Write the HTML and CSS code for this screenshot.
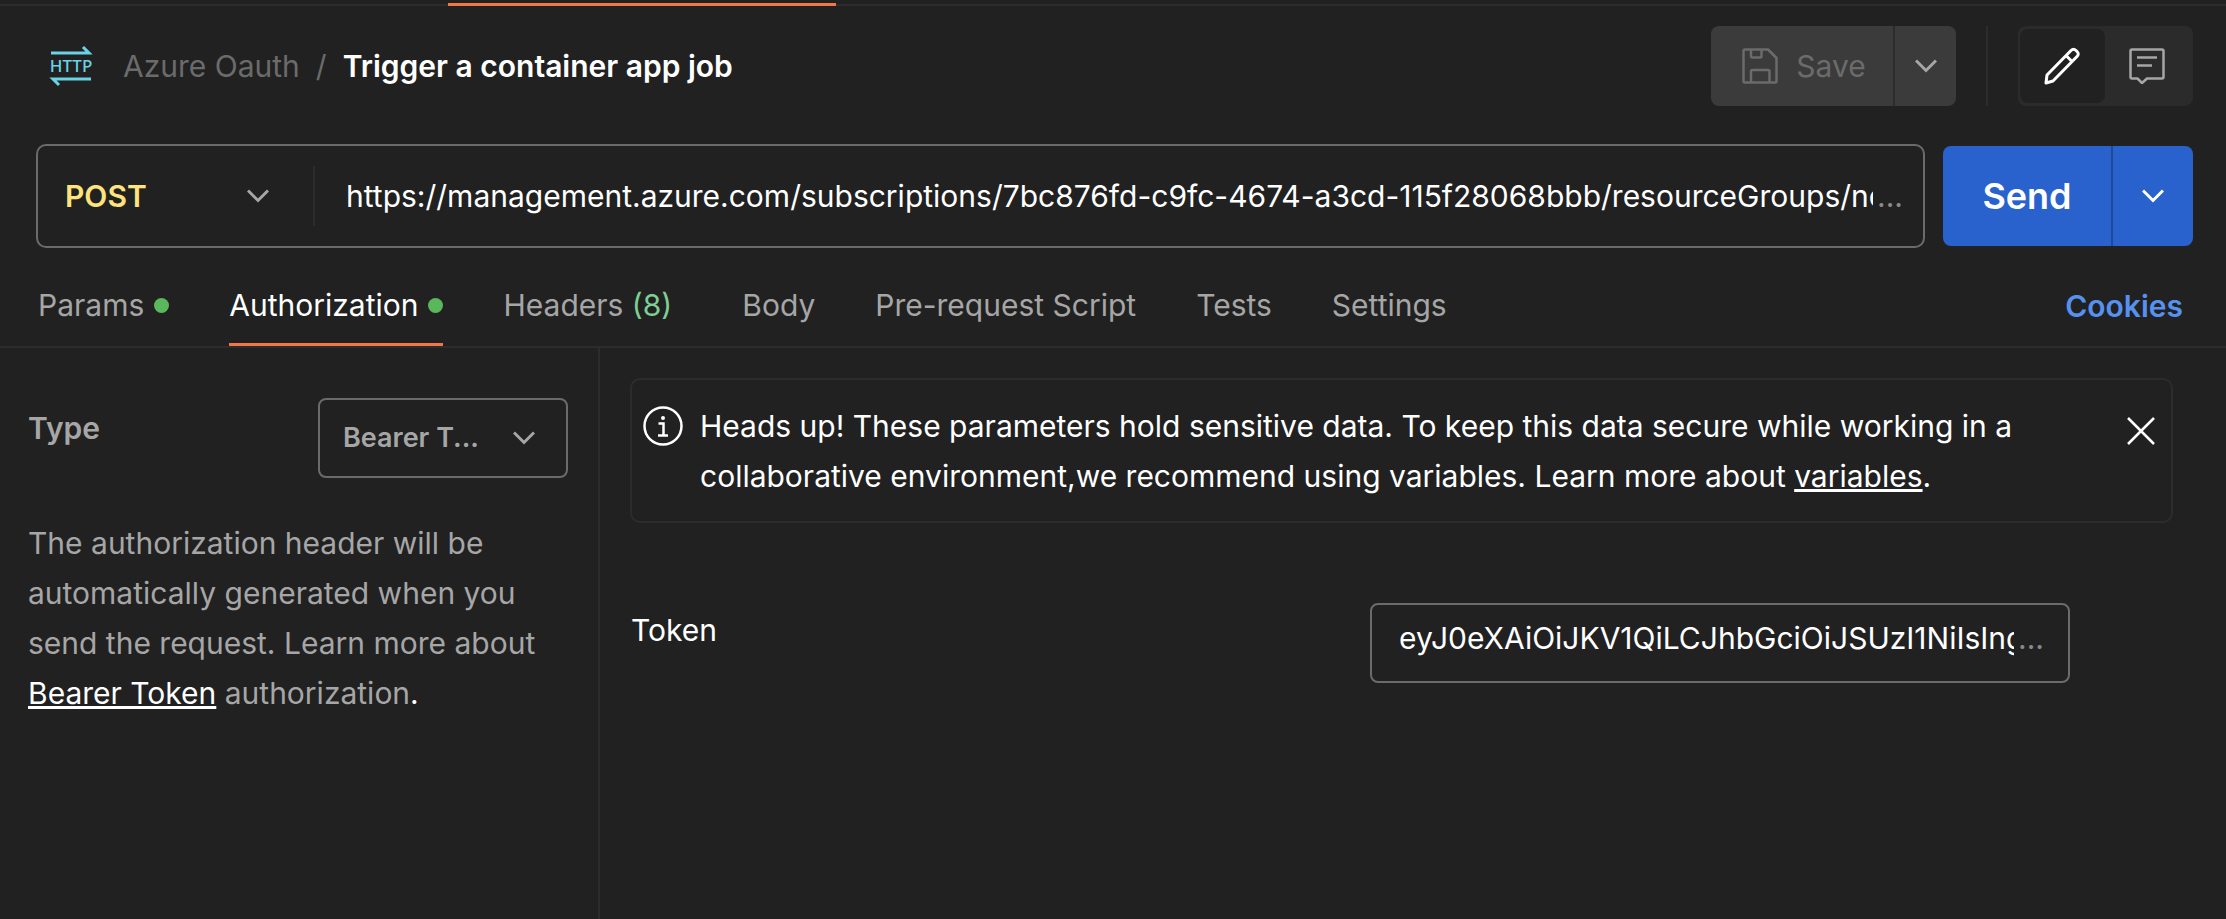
FILE: index.html
```html
<!DOCTYPE html>
<html lang="en">
<head>
<meta charset="utf-8">
<title>Trigger a container app job</title>
<link rel="stylesheet" href="styles.css">
</head>
<body>
<div class="tab-strip"><span class="tab-strip-active"></span></div>

<header class="header">
  <svg class="http-icon" width="40" height="40" viewBox="0 0 40 40" aria-hidden="true">
    <path d="M0 7H38L32 1M40 33H2L8 39" fill="none" stroke="currentColor" stroke-width="3"/>
    <text x="20" y="26" text-anchor="middle" fill="currentColor" class="http-text">HTTP</text>
  </svg>
  <nav class="crumbs" aria-label="Breadcrumb">
    <a class="crumb-parent" href="#">Azure Oauth</a>
    <span class="crumb-sep">/</span>
    <h1 class="crumb-title">Trigger a container app job</h1>
  </nav>
  <div class="split save">
    <button class="save-main" type="button" disabled>
      <svg width="36" height="36" viewBox="0 0 36 36" fill="none" stroke="currentColor" stroke-width="2.500" stroke-linejoin="round"><path d="M3 1.500H26L34.500 10V33Q34.500 34.500 33 34.500H3Q1.500 34.500 1.500 33V3Q1.500 1.500 3 1.500Z"/><path d="M9 1.500V8Q9 9.500 10.500 9.500H18Q19.500 9.500 19.500 8V1.500M9 34.500V23.500Q9 22 10.500 22H26Q27.500 22 27.500 23.500V34.500"/></svg>
      Save
    </button>
    <button class="save-more" type="button" aria-label="Save options">
      <svg width="22" height="14" viewBox="0 0 22 14" class="chevron"><path d="M1 1.500L11 11.500L21 1.500"/></svg>
    </button>
  </div>
  <span class="header-rule"></span>
  <div class="modes">
    <button class="mode mode-active" type="button" aria-label="Edit">
      <svg width="36" height="38" viewBox="0 0 36 38" fill="none" stroke="currentColor" stroke-width="3" stroke-linejoin="round"><path d="M2 36L3 28L27 3.500Q29.500 1 32 3.500L33 4.500Q35.500 7 33 9.500L9 34Z"/><path d="M22 8.500L28 14.500"/></svg>
    </button>
    <button class="mode" type="button" aria-label="Comments">
      <svg width="36" height="36" viewBox="0 0 36 36" fill="none" stroke="currentColor" stroke-width="2.500" stroke-linejoin="round"><path d="M3 1.500H33Q34.500 1.500 34.500 3V29Q34.500 30.500 33 30.500H18L13 35L8.500 30.500H3Q1.500 30.500 1.500 29V3Q1.500 1.500 3 1.500Z"/><path d="M8 9.500H28M8 17.500H23"/></svg>
    </button>
  </div>
</header>

<form class="request">
  <div class="url-box">
    <button class="method" type="button">POST
      <svg width="22" height="14" viewBox="0 0 22 14" class="chevron"><path d="M1 1.500L11 11.500L21 1.500"/></svg>
    </button>
    <input class="url" type="text" aria-label="Request URL" value="https://management.azure.com/subscriptions/7bc876fd-c9fc-4674-a3cd-115f28068bbb/resourceGroups/ne">
    <span class="more">...</span>
  </div>
  <div class="split send">
    <button class="send-main" type="button">Send</button>
    <button class="send-more" type="button" aria-label="Send options">
      <svg width="22" height="14" viewBox="0 0 22 14" class="chevron"><path d="M1 1.500L11 11.500L21 1.500"/></svg>
    </button>
  </div>
</form>

<nav class="tabs" aria-label="Request settings">
  <a class="tab" href="#">Params<span class="dot"></span></a>
  <a class="tab tab-active" href="#">Authorization<span class="dot"></span></a>
  <a class="tab" href="#">Headers <span class="count">(8)</span></a>
  <a class="tab" href="#">Body</a>
  <a class="tab" href="#">Pre-request Script</a>
  <a class="tab" href="#">Tests</a>
  <a class="tab" href="#">Settings</a>
  <a class="cookies" href="#">Cookies</a>
</nav>

<main class="panes">
  <section class="type-pane">
    <div class="type-row">
      <h2 class="type-label">Type</h2>
      <button class="type-select" type="button" aria-haspopup="listbox"><span>Bearer T...</span>
        <svg width="22" height="14" viewBox="0 0 22 14" class="chevron"><path d="M1 1.500L11 11.500L21 1.500"/></svg>
      </button>
    </div>
    <p class="type-help">The authorization header will be automatically generated when you send the request. Learn more about <a class="link" href="#">Bearer Token</a> authorization<span class="stop">.</span></p>
  </section>
  <section class="auth-pane">
    <div class="notice">
      <svg class="info" width="40" height="40" viewBox="0 0 40 40" fill="none" stroke="currentColor" stroke-width="2.500"><circle cx="20" cy="20" r="18.500"/><path d="M15.500 17.500H20.500V29M15 29.500H25" /><circle cx="20" cy="12" r="2" fill="currentColor" stroke="none"/></svg>
      <p class="notice-text">Heads up! These parameters hold sensitive data. To keep this data secure while working in a collaborative environment,we recommend using variables. Learn more about <a class="link" href="#">variables</a>.</p>
      <button class="close" type="button" aria-label="Dismiss">
        <svg width="28" height="28" viewBox="0 0 28 28" fill="none" stroke="currentColor" stroke-width="2.500"><path d="M1 1L27 27M27 1L1 27"/></svg>
      </button>
    </div>
    <div class="field">
      <label class="field-label" for="token">Token</label>
      <div class="token-box">
        <input class="token" id="token" type="text" value="eyJ0eXAiOiJKV1QiLCJhbGciOiJSUzI1NiIsIng">
        <span class="more">...</span>
      </div>
    </div>
  </section>
</main>
</body>
</html>
```
FILE: styles.css
```css
* { box-sizing: border-box; }

body {
  margin: 0;
  min-height: 100vh;
  display: flex;
  flex-direction: column;
  background: #212121;
  color: #fff;
  font: 400 30px/50px Inter, "Liberation Sans", sans-serif;
}

button, input {
  font: inherit;
  color: inherit;
  background: none;
  border: 0;
  padding: 0;
  margin: 0;
  outline: 0;
}

a { color: inherit; text-decoration: none; }
h1, h2, p { margin: 0; }
svg { flex: none; display: block; }

.chevron { fill: none; stroke: currentColor; stroke-width: 3; }

.tab-strip {
  display: flex;
  height: 6px;
  padding-left: 448px;
  border-bottom: 2px solid #2c2c2c;
}
.tab-strip-active { width: 388px; height: 3px; margin-top: 3px; background: #f0774a; }

.header {
  display: flex;
  align-items: center;
  padding: 20px 33px 0 51px;
}
.http-icon { overflow: visible; color: #6bd3e6; }
.http-text { font: 500 17px "Noto Sans", sans-serif; }
.crumbs {
  display: flex;
  flex: 1;
  gap: 16px;
  padding-left: 32px;
}
.crumb-parent, .crumb-sep { color: #6b6b6b; }
.crumb-title { font-size: 30px; font-weight: 600; }

.split { display: flex; border-radius: 8px; overflow: hidden; }
.split button { display: flex; align-items: center; justify-content: center; }
.save { height: 80px; background: #3b3b3b; }
.save-main { width: 182px; gap: 18px; padding-left: 4px; color: #6b6b6b; }
.save-more { width: 63px; border-left: 2px solid #2c2c2c; color: #a6a6a6; }
.header-rule { width: 2px; height: 80px; margin: 0 30px; background: #2c2c2c; }

.modes {
  display: flex;
  width: 175px;
  height: 80px;
  padding: 3px 4px 3px 2px;
  border-radius: 8px;
  background: #2b2b2b;
}
.mode {
  display: flex;
  flex: 1;
  align-items: center;
  justify-content: center;
  border-radius: 8px;
  color: #a6a6a6;
}
.mode-active { background: #212121; color: #fff; }

.request {
  display: flex;
  align-items: center;
  gap: 18px;
  padding: 38px 33px 0 36px;
}
.url-box {
  display: flex;
  flex: 1;
  align-items: center;
  height: 104px;
  padding-right: 20px;
  border: 2px solid #6b6b6b;
  border-radius: 10px;
}
.method {
  display: flex;
  align-items: center;
  justify-content: space-between;
  width: 277px;
  height: 60px;
  padding: 0 44px 0 27px;
  border-right: 2px solid #2c2c2c;
  color: #ffe47e;
  font-weight: 600;
}
.method .chevron { color: #a6a6a6; }
.url { flex: 1; min-width: 0; margin-left: 31px; }
.more { padding-left: 4px; color: #8a8a8a; }

.send { height: 100px; background: #2962cc; }
.send-main { width: 168px; font-size: 36px; font-weight: 600; }
.send-more { width: 82px; border-left: 2px solid #1f4a99; }

.tabs {
  display: flex;
  gap: 60px;
  height: 100px;
  padding: 0 43px 0 38px;
  border-bottom: 2px solid #2c2c2c;
  color: #a6a6a6;
}
.tab {
  display: flex;
  align-items: center;
  padding-top: 19px;
  border-bottom: 3px solid transparent;
  white-space: pre;
}
.tab-active { color: #fff; border-color: #f0774a; }
.dot { width: 15px; height: 15px; margin-left: 10px; border-radius: 50%; background: #5ab75c; }
.count { margin-right: 10px; color: #7ecf92; }
.cookies { margin-left: auto; padding-top: 33px; color: #5691f0; font-weight: 600; }

.panes { display: flex; flex: 1; }
.type-pane { flex: none; width: 600px; padding: 50px 30px 0 28px; border-right: 2px solid #2c2c2c; color: #a6a6a6; }
.type-row { display: flex; justify-content: space-between; }
.type-label { padding-top: 5px; font-size: 30px; font-weight: 600; }
.type-select {
  display: flex;
  align-items: center;
  justify-content: space-between;
  width: 250px;
  height: 80px;
  padding: 0 31px 0 23px;
  border: 2px solid #6b6b6b;
  border-radius: 8px;
  font-size: 27px;
  font-weight: 600;
}
.type-help { padding-top: 40px; }
.link { color: #fff; text-decoration: underline; text-decoration-thickness: 3px; text-underline-offset: 2px; }
.stop { color: #fff; }

.auth-pane { flex: 1; padding: 30px 53px 0 30px; }
.notice {
  display: flex;
  align-items: flex-start;
  padding: 21px 16px 20px 11px;
  border: 2px solid #2c2c2c;
  border-radius: 10px;
}
.info { margin-top: 5px; }
.notice-text { flex: 1; padding: 0 110px 0 17px; }
.close { padding-top: 16px; line-height: 0; }
.field {
  display: flex;
  align-items: flex-start;
  justify-content: space-between;
  padding: 80px 103px 0 1px;
}
.token-box {
  display: flex;
  align-items: flex-start;
  width: 700px;
  height: 80px;
  padding: 8px 24px 0 27px;
  border: 2px solid #6b6b6b;
  border-radius: 8px;
}
.token { flex: 1; min-width: 0; height: 50px; }
.field-label { padding-top: 2px; }
```
